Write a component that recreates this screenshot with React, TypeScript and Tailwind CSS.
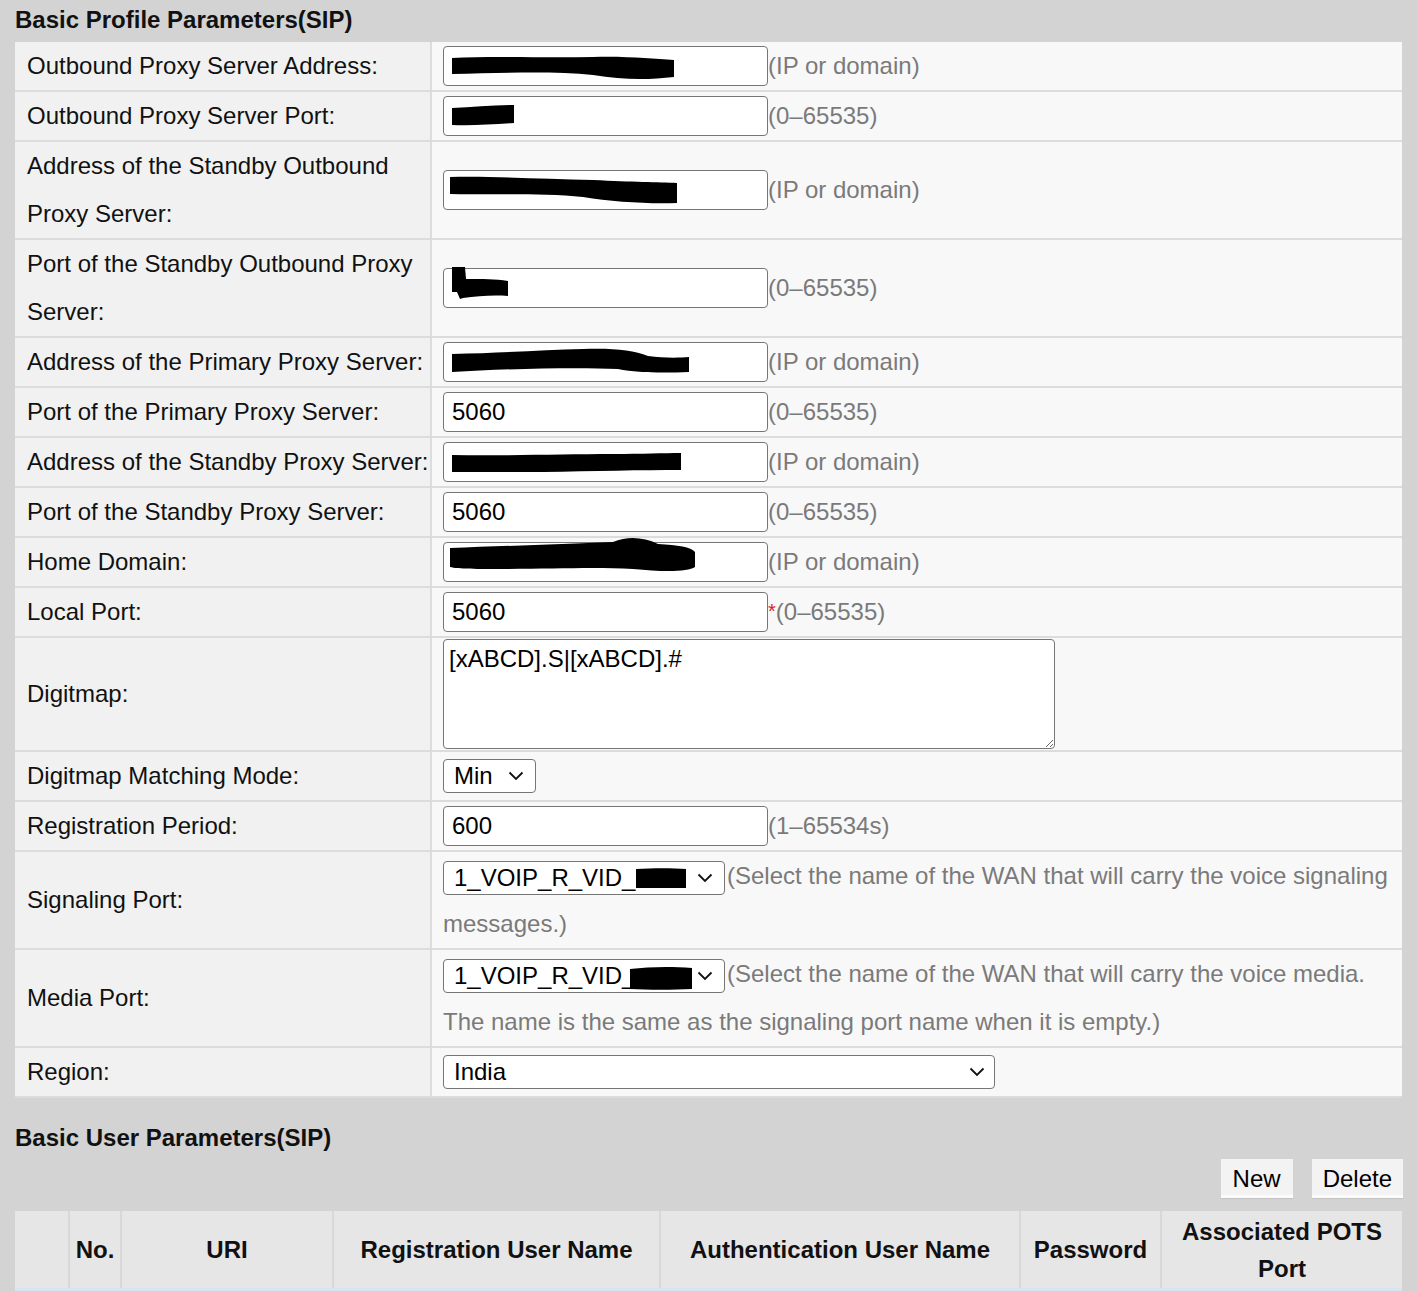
import { ReactNode } from 'react';

function Chevron() {
  return (
    <svg width="16" height="10" viewBox="0 0 16 10" className="shrink-0">
      <path d="M1.5 1.5 L8 8 L14.5 1.5" fill="none" stroke="#111" strokeWidth="1.8" />
    </svg>
  );
}

// black marker scribble used to hide values
function Blob({ d }: { d: string }) {
  return (
    <svg
      width="330"
      height="40"
      viewBox="0 0 330 40"
      className="absolute -left-[1.5px] -top-[1.5px] overflow-visible pointer-events-none"
    >
      <path d={d} fill="#000" />
    </svg>
  );
}

function Row({ label, children }: { label: ReactNode; children: ReactNode }) {
  return (
    <div className="flex border-b-2 border-[#dcdcdc]">
      <div className="w-[417px] shrink-0 bg-[#f1f1f1] border-r-2 border-[#dcdcdc] pl-3 leading-[48px] flex items-center whitespace-nowrap">
        <div>{label}</div>
      </div>
      <div className="flex-1 min-w-0 bg-[#f8f8f8] pl-[11px] pr-[11px] flex items-center">{children}</div>
    </div>
  );
}

function TextInput({
  value,
  hint,
  blob,
  required,
}: {
  value?: string;
  hint: string;
  blob?: string;
  required?: boolean;
}) {
  return (
    <div className="flex items-center">
      <div className="relative w-[325px] h-[40px] rounded-[4px] border-[1.5px] border-[#767676] bg-white px-2 leading-[37px] text-black">
        {value}
        {blob && <Blob d={blob} />}
      </div>
      {required && <span className="text-[#e0201a] text-[20px] self-start mt-[4px]">*</span>}
      <span className="text-[#7a7a7a]">{hint}</span>
    </div>
  );
}

function Select({
  value,
  className,
  blob,
  padRight = 'pr-[11px]',
}: {
  value: string;
  className: string;
  blob?: string;
  padRight?: string;
}) {
  return (
    <span
      className={
        'relative inline-flex items-center justify-between h-[34px] rounded-[4px] border-[1.5px] border-[#767676] bg-white pl-[10px] align-middle text-black leading-none ' +
        padRight +
        ' ' +
        className
      }
    >
      <span>{value}</span>
      <Chevron />
      {blob && <Blob d={blob} />}
    </span>
  );
}

export default function App() {
  return (
    <div className="min-h-screen bg-[#d3d3d3] px-[15px] text-[24px] text-[#111] font-['Liberation_Sans',Arial,sans-serif]">
      <h2 className="h-[42px] leading-[40px] font-bold">Basic Profile Parameters(SIP)</h2>

      <div>
        <Row label="Outbound Proxy Server Address:">
          <TextInput
            hint="(IP or domain)"
            blob="M9 12 C50 10 100 12 150 11 C185 10 210 13 231 14 L231 31 C205 34 180 34 150 29 C110 25 60 27 9 28 Z"
          />
        </Row>
        <Row label="Outbound Proxy Server Port:">
          <TextInput hint="(0–65535)" blob="M9 12 C30 11 50 9 71 9 L71 27 C50 28 30 30 9 29 Z" />
        </Row>
        <Row
          label={
            <>
              Address of the Standby Outbound
              <br />
              Proxy Server:
            </>
          }
        >
          <TextInput
            hint="(IP or domain)"
            blob="M7 7 C50 6 100 9 150 10 C190 12 215 12 234 13 L234 33 C205 34 170 32 140 27 C100 23 50 25 7 24 Z"
          />
        </Row>
        <Row
          label={
            <>
              Port of the Standby Outbound Proxy
              <br />
              Server:
            </>
          }
        >
          <TextInput
            hint="(0–65535)"
            blob="M9 -1 L22 -1 L23 11 C40 11 52 11 65 13 L65 28 C50 27 35 28 20 30 L17 31 L14 24 L9 24 Z"
          />
        </Row>
        <Row label="Address of the Primary Proxy Server:">
          <TextInput
            hint="(IP or domain)"
            blob="M9 12 C60 11 100 8 140 7 C170 6 190 8 205 14 C220 16 235 16 246 15 L246 30 C220 31 195 31 175 27 C130 25 60 27 9 30 Z"
          />
        </Row>
        <Row label="Port of the Primary Proxy Server:">
          <TextInput value="5060" hint="(0–65535)" />
        </Row>
        <Row label="Address of the Standby Proxy Server:">
          <TextInput
            hint="(IP or domain)"
            blob="M9 13 C60 14 120 12 170 12 C200 12 220 11 238 11 L238 28 C200 28 150 29 100 30 C60 30 30 30 9 30 Z"
          />
        </Row>
        <Row label="Port of the Standby Proxy Server:">
          <TextInput value="5060" hint="(0–65535)" />
        </Row>
        <Row label="Home Domain:">
          <TextInput
            hint="(IP or domain)"
            blob="M7 6 C60 4 120 2 170 0 C185 -6 200 -5 215 2 C235 3 248 5 252 10 L252 25 C245 30 220 30 190 27 C150 25 110 27 60 27 C35 27 15 27 7 25 Z"
          />
        </Row>
        <Row label="Local Port:">
          <TextInput value="5060" hint="(0–65535)" required />
        </Row>
        <Row label="Digitmap:">
          <div className="py-[1px]">
            <textarea
              className="block w-[612px] h-[110px] rounded-[4px] border-[1.5px] border-[#767676] bg-white px-[5px] py-[5px] leading-[28px] text-black outline-none"
              defaultValue="[xABCD].S|[xABCD].#"
            />
          </div>
        </Row>
        <Row label="Digitmap Matching Mode:">
          <Select value="Min" className="w-[93px]" />
        </Row>
        <Row label="Registration Period:">
          <TextInput value="600" hint="(1–65534s)" />
        </Row>
        <Row label="Signaling Port:">
          <div className="w-full leading-[48px] text-[#7a7a7a]">
            <Select
              value="1_VOIP_R_VID_"
              className="w-[282px] mr-[2px]"
              blob="M193 9 C210 8 230 8 243 9 L243 28 C225 28 210 28 193 28 Z"
            />
            <span>(Select the name of the WAN that will carry the voice signaling messages.)</span>
          </div>
        </Row>
        <Row label="Media Port:">
          <div className="w-full leading-[48px] text-[#7a7a7a]">
            <Select
              value="1_VOIP_R_VID_"
              className="w-[282px] mr-[2px]"
              blob="M187 11 C205 9 225 8 249 10 L249 31 C230 32 205 32 187 31 Z"
            />
            <span>
              (Select the name of the WAN that will carry the voice media. The name is the same as the signaling port
              name when it is empty.)
            </span>
          </div>
        </Row>
        <Row label="Region:">
          <Select value="India" className="w-[552px]" padRight="pr-[9px]" />
        </Row>
      </div>

      <h2 className="mt-[19px] h-[41px] leading-[41px] font-bold">Basic User Parameters(SIP)</h2>

      <div className="mt-[1px] flex justify-end gap-[19px] -mr-px">
        <button className="h-[39px] px-[12px] pt-[2px] bg-[#f3f3f3] border-b-[3px] border-[#fbfbfb] shadow-[0_1px_0_#c4c4c4] text-black">
          New
        </button>
        <button className="h-[39px] px-[11px] pt-[2px] bg-[#f3f3f3] border-b-[3px] border-[#fbfbfb] shadow-[0_1px_0_#c4c4c4] text-black">
          Delete
        </button>
      </div>

      <div className="mt-[13px] flex h-[77px] bg-[#e6e6e6] font-bold text-[#111]">
        <div className="w-[55px] border-r-2 border-[#d8d8d8]" />
        <div className="w-[52px] border-r-2 border-[#d8d8d8] flex items-center justify-center">No.</div>
        <div className="w-[212px] border-r-2 border-[#d8d8d8] flex items-center justify-center">URI</div>
        <div className="w-[327px] border-r-2 border-[#d8d8d8] flex items-center justify-center">
          Registration User Name
        </div>
        <div className="w-[360px] border-r-2 border-[#d8d8d8] flex items-center justify-center">
          Authentication User Name
        </div>
        <div className="w-[141px] border-r-2 border-[#d8d8d8] flex items-center justify-center">Password</div>
        <div className="flex-1 flex items-center justify-center text-center leading-[37px]">
          Associated POTS
          <br />
          Port
        </div>
      </div>
      <div className="h-[3px] bg-[#d8e4ef]" />
    </div>
  );
}
